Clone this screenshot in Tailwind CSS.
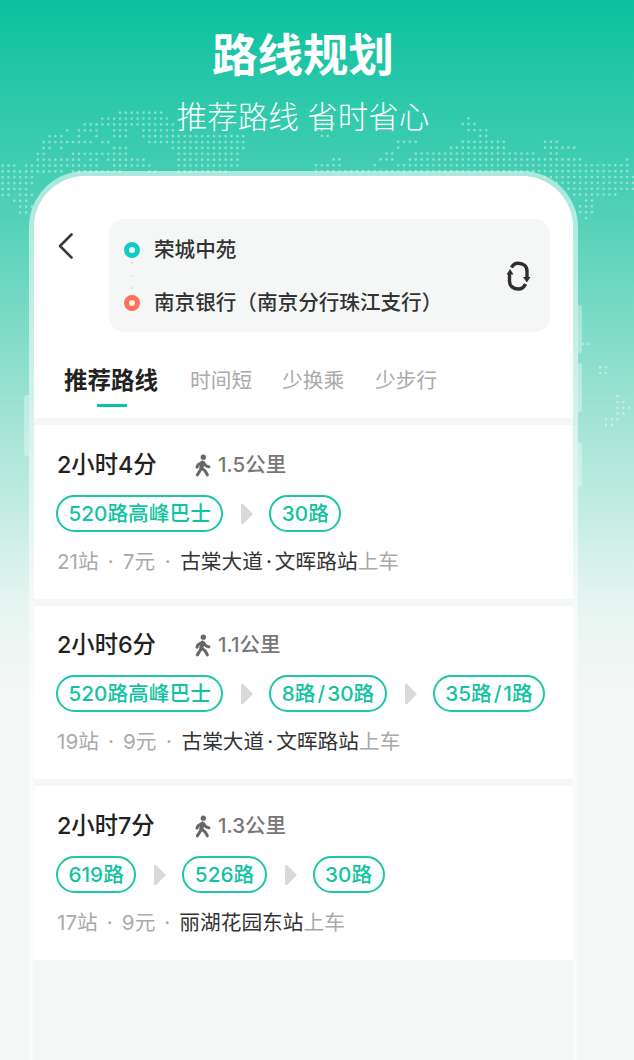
<!DOCTYPE html>
<html lang="en">
<head>
  <meta charset="UTF-8" />
  <meta name="viewport" content="width=device-width, initial-scale=1.0" />
  <title>路线规划</title>
  <script src="https://cdn.jsdelivr.net/npm/@tailwindcss/browser@4"></script>
</head>
<body class="relative w-[634px] h-[1060px] overflow-hidden bg-[linear-gradient(180deg,#0bc19f_0%,#4dd0b6_19%,#9ce2d2_38%,#e6f5f1_57%,#f5f7f6_66%)] font-['Inter','Noto_Sans_CJK_SC',sans-serif]">

  <!-- dotted world map -->
  <svg class="absolute left-0 top-0" width="634" height="440" fill="none" stroke="#fff" stroke-opacity=".4" stroke-linecap="round" aria-hidden="true">
    <g transform="translate(2.6 112.7) scale(5.87)" stroke-width=".46" stroke-dasharray="0 1">
      <path d="M20 0h7.01M17 1h11.01M14 2h1.01M16 2h13.01M11 3h.01M13 3h2.01M16 3h.01M19 3h2.01M24 3h5.01M8 4h2.01M13 4h.01M16 4h.01M19 4h2.01M24 4h17.01M7 5h8.01M17 5h1.01M25 5h16.01M7 6h1.01M10 6h.01M19 6h2.01M29 6h12.01M6 7h1.01M12 7h9.01M30 7h10.01M6 8h7.01M15 8h1.01M18 8h6.01M30 8h10.01M0 9h2.01M4 9h4.01M9 9h7.01M19 9h6.01M30 9h10.01M0 10h10.01M12 10h8.01M25 10h1.01M30 10h8.01M0 11h5.01M0 12h5.01M0 13h4.01M0 14h1.01M3 14h2.01M2 15h2.01M3 16h2.01M3 17h1.01"/>
    </g>
    <g transform="translate(316 118.3) scale(5.87)" stroke-width=".46" stroke-dasharray="0 1">
      <path d="M26 0h.01M25 1h2.01M0 1h3.01M26 2h3.01M0 2h1.01M28 3h1.01M1 3h1.01M14 4h3.01M25 4h7.01M39 4h2.01M14 5h.01M23 5h9.01M39 5h5.01M12 6h1.01M17 6h20.01M40 6h1.01M3 7h1.01M11 7h2.01M16 7h29.01M53 7h.01M0 8h4.01M10 8h.01M14 8h39.01M0 9h37.01M37 9h16.01M39 10h15.01M41 11h13.01M43 12h11.01M44 13h2.01M47 13h4.01M46 14h1.01M45 15h2.01M45 16h2.01M46 17h.01"/>
    </g>
    <g transform="translate(582.8 344) scale(5.8)" stroke-width=".46" stroke-dasharray="0 1">
      <path d="M0 0h1.01M3 4h1.01M3 5h1.01M6 9h.01M6 10h1.01M6 11h2.01M6 12h1.01M4 13h2.01M4 14h1.01"/>
    </g>
  </svg>

  <!-- header -->
  <div class="relative h-[171px] pr-[28px] flex flex-col items-center text-white">
    <h1 class="mt-[26px] h-[60px] leading-[60px] text-[45.5px] font-bold">路线规划</h1>
    <p class="mt-[9px] h-[44px] leading-[44px] text-[30.5px] font-light whitespace-pre">推荐路线 省时省心</p>
  </div>

  <!-- phone frame -->
  <div class="relative ml-[29px] w-[549px] h-[889px] border-[5px] border-b-0 border-white/55 rounded-t-[56px]">
    <span class="absolute left-[-10px] top-[219px] w-[5px] h-[61px] bg-white/35 rounded-l-[3px]"></span>
    <span class="absolute right-[-9px] top-[129px] w-[4px] h-[48px] bg-white/35 rounded-r-[3px]"></span>
    <span class="absolute right-[-9px] top-[187px] w-[4px] h-[49px] bg-white/35 rounded-r-[3px]"></span>
    <span class="absolute right-[-9px] top-[266px] w-[4px] h-[45px] bg-white/35 rounded-r-[3px]"></span>

    <div class="h-full bg-[#f5f7f6] rounded-t-[51px] overflow-hidden flex flex-col">
      <!-- top section -->
      <div class="h-[242px] bg-white">
        <div class="flex pt-[43px]">
          <svg class="ml-[24px] mt-[14px] w-[15px] h-[26px]" viewBox="0 0 15 26" fill="none" stroke="#3a3a3a" stroke-width="2.6" stroke-linecap="round" stroke-linejoin="round"><path d="M13.5 1.5 2 13l11.5 11.5"/></svg>
          <div class="relative ml-[36px] w-[441px] h-[113px] bg-[#f5f7f6] rounded-[15px]">
            <div class="absolute left-[14.5px] top-[22.5px] w-[16px] h-[16px] rounded-full border-[5px] border-[#0fcdc0] bg-[#eef8f6]"></div>
            <div class="absolute left-[21.5px] top-[43px] w-[2px] h-[2px] bg-[#e3e5e5]"></div>
            <div class="absolute left-[21.5px] top-[56px] w-[2px] h-[2px] bg-[#e3e5e5]"></div>
            <div class="absolute left-[21.5px] top-[68px] w-[2px] h-[2px] bg-[#e3e5e5]"></div>
            <div class="absolute left-[14.5px] top-[75.5px] w-[16px] h-[16px] rounded-full border-[5px] border-[#ff6f5a] bg-[#fdf1ee]"></div>
            <div class="pl-[45px] pt-[16px] text-[20.6px] leading-[30px] font-medium text-[#333]">
              <div>荣城中苑</div>
              <div class="mt-[23px]">南京银行（南京分行珠江支行）</div>
            </div>
            <svg class="absolute left-[398px] top-[42px] w-[24px] h-[30px]" viewBox="0 0 24 30" fill="none" stroke="#2f2f2f" stroke-width="3.4"><path d="M4.5 6.500C6 3.500 8 2.200 11 2.200c5.500 0 9 3 9 8V17"/><path d="M18.500 23C17 26.500 14.500 28 11.500 28c-5.500 0-9-3-9-8v-8"/><path d="M16 16h7.500L19.800 21.500z" fill="#2f2f2f" stroke="none"/><path d="M-.5 13.500h7L3 8z" fill="#2f2f2f" stroke="none"/></svg>
          </div>
        </div>
        <div class="relative flex items-center mt-[31px] h-[36px] pl-[30px]">
          <span class="w-[94px] text-[23.5px] font-bold text-[#222] whitespace-nowrap">推荐路线</span>
          <span class="ml-[32px] w-[62px] text-[20.7px] text-[#aaa] whitespace-nowrap">时间短</span>
          <span class="ml-[30px] w-[62px] text-[20.7px] text-[#aaa] whitespace-nowrap">少换乘</span>
          <span class="ml-[31px] w-[62px] text-[20.7px] text-[#aaa] whitespace-nowrap">少步行</span>
          <span class="absolute left-[63px] top-[41px] w-[30px] h-[3px] bg-[#10c0a0]"></span>
        </div>
      </div>

      <!-- route 1 -->
      <div class="mt-[7px] h-[174px] bg-white pl-[22px] pt-[26px]">
        <div class="flex items-center h-[28px] pl-px">
          <span class="w-[138px] text-[23.3px] font-medium text-[#222]">2小时4分</span>
          <svg class="w-[16px] h-[23px]" viewBox="33 24 48 66" fill="none" stroke="#666" stroke-width="9" stroke-linecap="round" stroke-linejoin="round"><circle cx="58" cy="32" r="8" fill="#666" stroke="none"/><path stroke-width="12" d="M56 49 52 64"/><path d="M56 47 42 55 39 62M58 48 66 58 75 61M52 66 40 85M52 64 64 74 70 85"/></svg>
          <span class="ml-[7px] text-[20.5px] font-medium text-[#777]">1.5公里</span>
        </div>
        <div class="mt-[16px] flex items-center">
          <span class="h-[37px] px-[10.5px] flex items-center rounded-full border-2 border-[#1cc6a6] text-[20.7px] font-medium text-[#12c3a2]">520路高峰巴士</span>
          <svg class="ml-[18px] mr-[16px] w-[12px] h-[20px]" viewBox="0 0 12 20" fill="#d9d9d9"><path d="M0 0h2l10 10-10 10H0z"/></svg>
          <span class="h-[37px] px-[10.5px] flex items-center rounded-full border-2 border-[#1cc6a6] text-[20.7px] font-medium text-[#12c3a2]">30路</span>
        </div>
        <div class="mt-[16px] flex items-center h-[28px] pl-px text-[20.7px] text-[#aaa] whitespace-nowrap">
          <span>21站</span><span class="w-[24px] text-center">·</span><span>7元</span><span class="w-[25px] text-center">·</span><span class="text-[#333]">古棠大道<span class="mx-[3px]">·</span>文晖路站</span><span>上车</span>
        </div>
      </div>

      <!-- route 2 -->
      <div class="mt-[7px] h-[173px] bg-white pl-[22px] pt-[25px]">
        <div class="flex items-center h-[28px] pl-px">
          <span class="w-[138px] text-[23.3px] font-medium text-[#222]">2小时6分</span>
          <svg class="w-[16px] h-[23px]" viewBox="33 24 48 66" fill="none" stroke="#666" stroke-width="9" stroke-linecap="round" stroke-linejoin="round"><circle cx="58" cy="32" r="8" fill="#666" stroke="none"/><path stroke-width="12" d="M56 49 52 64"/><path d="M56 47 42 55 39 62M58 48 66 58 75 61M52 66 40 85M52 64 64 74 70 85"/></svg>
          <span class="ml-[7px] text-[20.5px] font-medium text-[#777]">1.1公里</span>
        </div>
        <div class="mt-[16px] flex items-center">
          <span class="h-[37px] px-[10.5px] flex items-center rounded-full border-2 border-[#1cc6a6] text-[20.7px] font-medium text-[#12c3a2]">520路高峰巴士</span>
          <svg class="ml-[18px] mr-[16px] w-[12px] h-[20px]" viewBox="0 0 12 20" fill="#d9d9d9"><path d="M0 0h2l10 10-10 10H0z"/></svg>
          <span class="h-[37px] px-[10.5px] flex items-center rounded-full border-2 border-[#1cc6a6] text-[20.7px] font-medium text-[#12c3a2]">8路<span class="mx-[2px]">/</span>30路</span>
          <svg class="ml-[18px] mr-[16px] w-[12px] h-[20px]" viewBox="0 0 12 20" fill="#d9d9d9"><path d="M0 0h2l10 10-10 10H0z"/></svg>
          <span class="h-[37px] px-[10.5px] flex items-center rounded-full border-2 border-[#1cc6a6] text-[20.7px] font-medium text-[#12c3a2]">35路<span class="mx-[2px]">/</span>1路</span>
        </div>
        <div class="mt-[16px] flex items-center h-[28px] pl-px text-[20.7px] text-[#aaa] whitespace-nowrap">
          <span>19站</span><span class="w-[24px] text-center">·</span><span>9元</span><span class="w-[25px] text-center">·</span><span class="text-[#333]">古棠大道<span class="mx-[3px]">·</span>文晖路站</span><span>上车</span>
        </div>
      </div>

      <!-- route 3 -->
      <div class="mt-[7px] h-[174px] bg-white pl-[22px] pt-[26px]">
        <div class="flex items-center h-[28px] pl-px">
          <span class="w-[138px] text-[23.3px] font-medium text-[#222]">2小时7分</span>
          <svg class="w-[16px] h-[23px]" viewBox="33 24 48 66" fill="none" stroke="#666" stroke-width="9" stroke-linecap="round" stroke-linejoin="round"><circle cx="58" cy="32" r="8" fill="#666" stroke="none"/><path stroke-width="12" d="M56 49 52 64"/><path d="M56 47 42 55 39 62M58 48 66 58 75 61M52 66 40 85M52 64 64 74 70 85"/></svg>
          <span class="ml-[7px] text-[20.5px] font-medium text-[#777]">1.3公里</span>
        </div>
        <div class="mt-[16px] flex items-center">
          <span class="h-[37px] px-[10.5px] flex items-center rounded-full border-2 border-[#1cc6a6] text-[20.7px] font-medium text-[#12c3a2]">619路</span>
          <svg class="ml-[18px] mr-[16px] w-[12px] h-[20px]" viewBox="0 0 12 20" fill="#d9d9d9"><path d="M0 0h2l10 10-10 10H0z"/></svg>
          <span class="h-[37px] px-[10.5px] flex items-center rounded-full border-2 border-[#1cc6a6] text-[20.7px] font-medium text-[#12c3a2]">526路</span>
          <svg class="ml-[18px] mr-[16px] w-[12px] h-[20px]" viewBox="0 0 12 20" fill="#d9d9d9"><path d="M0 0h2l10 10-10 10H0z"/></svg>
          <span class="h-[37px] px-[10.5px] flex items-center rounded-full border-2 border-[#1cc6a6] text-[20.7px] font-medium text-[#12c3a2]">30路</span>
        </div>
        <div class="mt-[16px] flex items-center h-[28px] pl-px text-[20.7px] text-[#aaa] whitespace-nowrap">
          <span>17站</span><span class="w-[24px] text-center">·</span><span>9元</span><span class="w-[24px] text-center">·</span><span class="text-[#333]">丽湖花园东站</span><span>上车</span>
        </div>
      </div>
    </div>
  </div>
</body>
</html>
